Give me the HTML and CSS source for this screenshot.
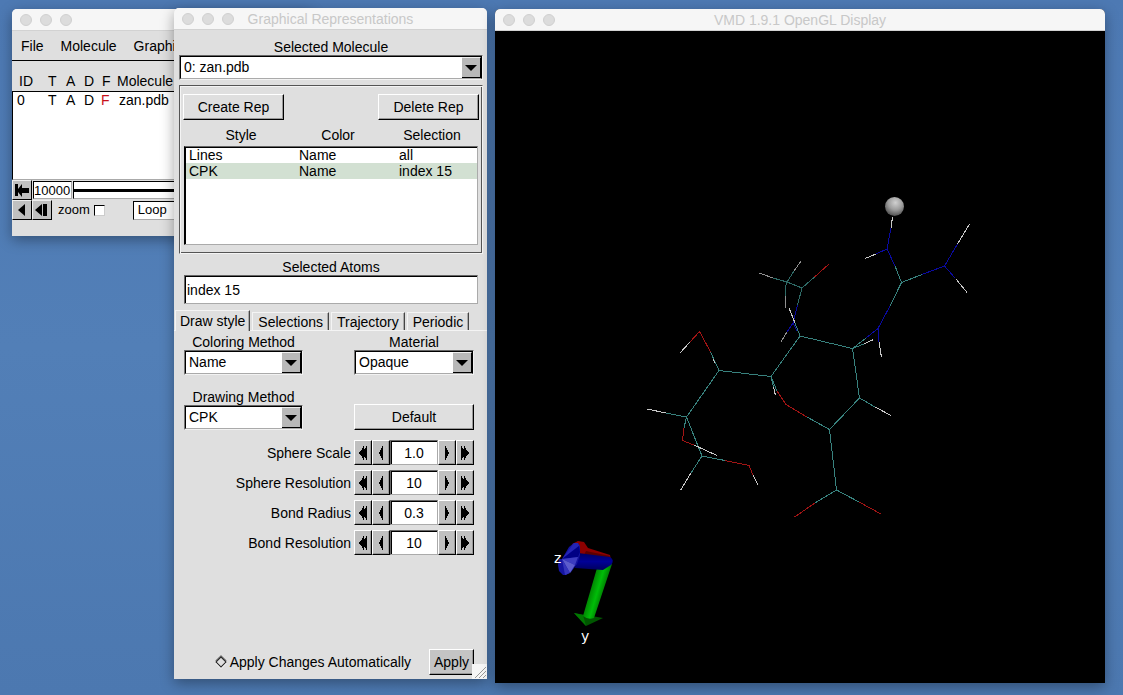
FILE: index.html
```html
<!DOCTYPE html>
<html lang="en">
<head>
<meta charset="utf-8">
<title>VMD</title>
<link rel="stylesheet" href="styles.css">
</head>
<body>
<svg class="defs" aria-hidden="true">
  <symbol id="left" viewBox="0 0 14 20"><path d="M9 3v14H8v-2H7v-2H6v-2H5V9h1V7h1V5h1V3z"/></symbol>
  <symbol id="right" viewBox="0 0 14 20"><path d="M5 3v14h1v-2h1v-2h1v-2h1V9H8V7H7V5H6V3z"/></symbol>
  <symbol id="left2" viewBox="0 0 14 20"><path d="M8 3v3h1V5h1V3h1v14h-1v-2H9v-1H8v3H7v-2H6v-2H5v-1H4v-1H3V9h1V8h1V7h1V5h1V3z"/></symbol>
  <symbol id="right2" viewBox="0 0 14 20"><path d="M6 3v3H5V5H4V3H3v14h1v-2h1v-1h1v3h1v-2h1v-2h1v-1h1v-1h1V9h-1V8H9V7H8V5H7V3z"/></symbol>
</svg>
<main class="desktop">
  <section class="window main-window" aria-label="VMD Main">
    <header class="titlebar"><i></i><i></i><i></i></header>
    <nav class="menubar"><button>File</button><button>Molecule</button><button>Graphics</button></nav>
    <div class="mol-row mol-head"><span>ID</span><span>T</span><span>A</span><span>D</span><span>F</span><span>Molecule</span></div>
    <div class="mol-list">
      <div class="mol-row"><span>0</span><span>T</span><span>A</span><span>D</span><span class="red">F</span><span>zan.pdb</span></div>
    </div>
    <div class="transport">
      <button class="key" aria-label="Go to start"><svg width="16" height="16"><path d="M1 2h3v5l4-5v4h7v5H8v4L4 10v4H1z"/></svg></button>
      <input class="frame" value="10000" aria-label="Frame">
      <div class="track"></div>
    </div>
    <div class="transport">
      <button class="key" aria-label="Play backwards"><svg width="16" height="16"><path d="M11 2v12L4 8z"/></svg></button>
      <button class="key" aria-label="Step backwards"><svg width="16" height="16"><path d="M8 2v12L1 8zM9 2h4v12H9z"/></svg></button>
      <label class="zoom">zoom <input type="checkbox"></label>
      <select class="loop" aria-label="Loop mode"><option>Loop</option></select>
    </div>
  </section>

  <section class="window reps-window" aria-label="Graphical Representations">
    <header class="titlebar"><i></i><i></i><i></i><h1 class="reps-title">Graphical Representations</h1></header>
    <div class="reps-body">
      <label class="caption" for="molecule">Selected Molecule</label>
      <div class="choice"><select id="molecule"><option>0: zan.pdb</option></select><span class="arrow"></span></div>
      <div class="group">
        <div class="rep-actions"><button class="push">Create Rep</button><button class="push">Delete Rep</button></div>
        <div class="rep-head"><span>Style</span><span>Color</span><span>Selection</span></div>
        <div class="rep-list">
          <table>
            <tr><td>Lines</td><td>Name</td><td>all</td></tr>
            <tr class="selected"><td>CPK</td><td>Name</td><td>index 15</td></tr>
          </table>
        </div>
      </div>
      <label class="caption atoms-label" for="atoms">Selected Atoms</label>
      <input class="atoms" id="atoms" value="index 15">
    </div>
    <div class="tabs" role="tablist">
      <button class="tab active" role="tab">Draw style</button><button class="tab" role="tab">Selections</button><button class="tab" role="tab">Trajectory</button><button class="tab" role="tab">Periodic</button>
    </div>
    <div class="panel">
      <div class="methods">
        <div><label class="caption" for="coloring">Coloring Method</label><div class="choice"><select id="coloring"><option>Name</option></select><span class="arrow"></span></div></div>
        <div><label class="caption" for="material">Material</label><div class="choice"><select id="material"><option>Opaque</option></select><span class="arrow"></span></div></div>
        <div><label class="caption" for="drawing">Drawing Method</label><div class="choice"><select id="drawing"><option>CPK</option></select><span class="arrow"></span></div></div>
        <button class="push default">Default</button>
      </div>
      <div class="spinners">
        <label for="s1">Sphere Scale</label>
        <div class="spin"><button aria-label="Much less"><svg><use href="#left2"/></svg></button><button aria-label="Less"><svg><use href="#left"/></svg></button><input id="s1" value="1.0"><button aria-label="More"><svg><use href="#right"/></svg></button><button aria-label="Much more"><svg><use href="#right2"/></svg></button></div>
        <label for="s2">Sphere Resolution</label>
        <div class="spin"><button aria-label="Much less"><svg><use href="#left2"/></svg></button><button aria-label="Less"><svg><use href="#left"/></svg></button><input id="s2" value="10"><button aria-label="More"><svg><use href="#right"/></svg></button><button aria-label="Much more"><svg><use href="#right2"/></svg></button></div>
        <label for="s3">Bond Radius</label>
        <div class="spin"><button aria-label="Much less"><svg><use href="#left2"/></svg></button><button aria-label="Less"><svg><use href="#left"/></svg></button><input id="s3" value="0.3"><button aria-label="More"><svg><use href="#right"/></svg></button><button aria-label="Much more"><svg><use href="#right2"/></svg></button></div>
        <label for="s4">Bond Resolution</label>
        <div class="spin"><button aria-label="Much less"><svg><use href="#left2"/></svg></button><button aria-label="Less"><svg><use href="#left"/></svg></button><input id="s4" value="10"><button aria-label="More"><svg><use href="#right"/></svg></button><button aria-label="Much more"><svg><use href="#right2"/></svg></button></div>
      </div>
    </div>
    <footer class="apply-row">
      <label class="auto"><input type="checkbox">Apply Changes Automatically</label>
      <button class="push apply">Apply</button>
    </footer>
    <svg class="grip" width="15" height="15" aria-hidden="true"><path d="M3 14L14 3M7 14L14 7M11 14l3-3"/></svg>
  </section>

  <section class="window display-window" aria-label="OpenGL Display">
    <header class="titlebar"><i></i><i></i><i></i><h1 class="display-title">VMD 1.9.1 OpenGL Display</h1></header>
    <svg class="scene" viewBox="495 31 610 652" role="img" aria-label="Molecule zan.pdb">
      <defs>
        <radialGradient id="ball" cx=".55" cy=".3" r=".75"><stop offset="0" stop-color="#d0d0d0"/><stop offset=".5" stop-color="#9c9c9c"/><stop offset="1" stop-color="#444"/></radialGradient>
        <linearGradient id="green" x1="588" y1="592" x2="605" y2="597" gradientUnits="userSpaceOnUse"><stop offset="0" stop-color="#007a00"/><stop offset=".5" stop-color="#00bd08"/><stop offset="1" stop-color="#006400"/></linearGradient>
        <linearGradient id="blue" x1="0" y1="0" x2="0" y2="1"><stop offset="0" stop-color="#000060"/><stop offset=".5" stop-color="#000096"/><stop offset="1" stop-color="#00005e"/></linearGradient>
      </defs>
      <g class="bonds">
        <path class="c" d="M895 266L901.5 282.5L922 274.5M901.5 282.5L890 306M866 338L852.5 348.5L864 344M852.5 348.5L800 336L771 376.5L719 370.5L686.5 417L702 456L725 460.5M852.5 348.5L859.5 398L875 407M859.5 398L829.5 429.5L807 417M829.5 429.5L836.5 490L815 503M836.5 490L859 502M777 391L771 376.5L773.5 387M719 370.5L710.5 352M686.5 417L666 413M686.5 417L684 428M702 456L691 473M800 336L795 323"/>
        <path class="c far" d="M773 278L787 282L794 271M785.5 296V286L787 282L802 288L814.5 277M802 288L797.5 305"/>
        <path class="n" d="M891 228L887 249L876 254M887 249L895 266M922 274.5L944.5 266L957.5 244M944.5 266L955 278M890 306L878 328.5L879 342M878 328.5L866 338M797.5 305L793 323L787 332M793 323L797 331"/>
        <path class="o" d="M807 417L786 404.5L777 391M710.5 352L699.5 331.5L690 342M684 428L682.5 440.5L700 447.5M725 460.5L749 465.5L753 475M815 503L794.5 517M859 502L881 514M814.5 277L829 264"/>
        <path class="h" d="M892.5 217L891 228M876 254L865 258.5M957.5 244L969.5 224M956 279L967 292.5M879 342L881.5 357.5M864 344L873.5 339.5M875 407L891 415.5M773.5 387L775.5 395.5M690 342L679.5 353.5M715 363L713 359M666 413L647 409M694 445L717 455.5M753 475L758 485M691 473L680.5 490.5M789 308L795 323"/>
        <path class="h far" d="M773 278L759 273M794 271L801 261M785.5 296V308M787 332L781 342"/>
      </g>
      <circle cx="894.5" cy="206.5" r="9.5" fill="url(#ball)"/>
      <path fill="#8c0000" d="M572 544l6-3 6 1 4 6 22 7 1 5-35-7z"/>
      <path fill="#5c0000" d="M586 551l24 5-2 3-24-4z"/>
      <path fill="#005600" d="M574 613l29 5-17 8z"/>
      <path fill="#007800" d="M574 613l9 2 3 11z"/>
      <path fill="url(#green)" d="M597 568l-14 48q5 4 11 2l18-54z"/>
      <path fill="url(#blue)" d="M578 553l32 4q5 3 1 8l-8 5-28-2z"/>
      <path fill="#1414a0" d="M562 559l7-12 5-4h4l2 3v9l-3 9-6 8-5 3h-3l-4-4-1-6 1-6z"/>
      <path fill="#2424b4" d="M562 559l12-16h4l1 3z"/>
      <path fill="#000084" d="M562 559l17-13 1 6-2 5z"/>
      <path fill="#3c3cc0" d="M562 559l16-2-3 8z"/>
      <path fill="#5c5ccc" d="M562 559l13 6-5 8z"/>
      <path fill="#3434bc" d="M562 559l8 14-5 2z"/>
      <text x="554" y="563">z</text><text x="581" y="641">y</text>
    </svg>
  </section>
</main>
</body>
</html>
```
FILE: styles.css
```css
* { box-sizing: border-box; }
body { margin: 0; font: 14px/16px "Liberation Sans", Arial, sans-serif; color: #000; }
button, input, select { font: inherit; color: inherit; margin: 0; padding: 0; border: 0; border-radius: 0; background: none; appearance: none; outline: 0; }
.defs { position: absolute; width: 0; height: 0; }
.desktop { position: relative; height: 100vh; min-height: 690px; overflow: hidden; background: linear-gradient(#4d79b3, #527fb7 50%, #4c78b0); }

.window { position: absolute; display: flex; flex-direction: column; background: #dfdfdf; border-radius: 5px 5px 0 0; box-shadow: 0 4px 14px rgba(0, 0, 0, .35); }
.main-window { left: 12px; top: 9px; width: 300px; }
.reps-window { left: 174px; top: 8px; bottom: 16px; width: 313px; }
.display-window { left: 495px; top: 9px; right: 18px; bottom: 12px; background: #000; }

.titlebar { flex: none; height: 22px; display: flex; align-items: center; gap: 8px; padding-left: 8px; background: #f6f6f6; border-bottom: 1px solid #d2d2d2; border-radius: 5px 5px 0 0; }
.titlebar i { width: 12px; height: 12px; border-radius: 50%; background: #dcdcdc; border: 1px solid #d0d0d0; }
.titlebar h1 { flex: 1; margin: 0; font-size: 14px; font-weight: 400; text-align: center; white-space: nowrap; color: #c8c8c8; }
.titlebar .reps-title { padding-right: 68px; }
.titlebar .display-title { padding-right: 68px; }

.menubar { display: flex; gap: 17px; height: 30px; padding-left: 9px; border-bottom: 1px solid #000; }
.mol-row { display: grid; grid-template-columns: 29px 18px 18px 18px 15px 1fr; height: 16px; padding-left: 7px; }
.mol-head { margin: 12px 0 2px; }
.mol-list { height: 89px; background: #fff; border: solid; border-width: 1px 0 1px 1px; border-color: #000 #000 #aaa; }
.mol-list .mol-row { padding-left: 4px; grid-template-columns: 31px 18px 18px 17px 18px 1fr; }
.red { color: #c8101a; }
.transport { display: flex; align-items: center; height: 20px; font-size: 13px; }
.transport:last-child { margin-bottom: 16px; }
.key { flex: none; width: 20px; height: 20px; display: grid; place-items: center; background: #c0c0c0; border: 1px solid; border-color: #eee #000 #000 #eee; }
.frame { width: 39px; height: 18px; margin: 0 1px; background: #fff; border: 1px solid; border-color: #000 #aaa #aaa #000; }
.track { flex: 1; height: 18px; background: linear-gradient(#fff 7px, #000 7px, #000 10px, #fff 10px); border: 1px solid; border-color: #000 #aaa #aaa #000; }
.zoom { display: flex; align-items: center; gap: 4px; padding: 0 28px 0 6px; }
.zoom input { width: 11px; height: 11px; background: #fff; border: 1px solid; border-color: #000 #ccc #ccc #000; }
.loop { width: 100px; height: 19px; padding-left: 4px; background: #fff; border: 1px solid; border-color: #000 #aaa #aaa #000; }

.reps-body { display: flex; flex-direction: column; padding: 9px 4px 0 5px; }
.caption { display: block; text-align: center; }
.choice { position: relative; height: 25px; background: #fff; border: 1px solid; border-color: #666 #f2f2f2 #f2f2f2 #777; }
.choice select { display: block; width: 100%; height: 100%; padding: 0 0 1px 3px; border: 1px solid; border-color: #000 #000 #aaa #000; }
.arrow { position: absolute; top: 1px; right: 1px; width: 19px; height: 21px; display: grid; place-items: center; background: #b8b8b8; border: solid; border-width: 1px 1px 1px 0; border-color: #eee #000 #000; pointer-events: none; }
.arrow::before { content: ""; border: solid transparent; border-width: 6px 6px 0; border-top-color: #000; }
.group { margin-top: 5px; padding: 8px 3px; border: 1px solid; border-color: #555 #f4f4f4 #f4f4f4 #555; box-shadow: inset 1px 1px #f4f4f4, inset -1px -1px #555; }
.push { height: 26px; padding-bottom: 1px; border: 1px solid; border-color: #fff #000 #000 #fff; background: #dfdfdf; box-shadow: inset -1px -1px #999; }
.rep-actions { display: flex; justify-content: space-between; }
.rep-actions .push { width: 101px; }
.rep-head { display: grid; grid-template-columns: 116px 78px 1fr; margin: 7px 0 3px; text-align: center; }
.rep-head span:last-child { padding-left: 8px; }
.rep-list { height: 99px; background: #fff; border: 1px solid; border-color: #666 #aaa #aaa #000; box-shadow: inset 1px 1px #000; padding: 0 0 0 1px; margin: 0 1px; }
.rep-list table { width: 100%; table-layout: fixed; border-spacing: 0; }
.rep-list td { height: 16px; padding: 0 0 0 3px; }
.rep-list td:first-child { width: 110px; }
.rep-list td:nth-child(2) { width: 100px; }
.selected { background: #d2e0d2; }
.atoms-label { margin-top: 5px; }
.atoms { height: 29px; margin: 0 5px; padding-left: 2px; background: #fff; border: 1px solid; border-color: #666 #aaa #aaa #666; box-shadow: inset 1px 1px #000; }

.tabs { display: flex; align-items: flex-end; gap: 2px; height: 21px; margin-top: 6px; padding-left: 1px; border-bottom: 1px solid #f4f4f4; }
.tab { height: 18px; padding: 0 5px; border: solid; border-width: 1px 1px 0; border-color: #f4f4f4 #444 #f4f4f4 #f4f4f4; box-shadow: inset -1px 0 #aaa; white-space: nowrap; }
.tab.active { height: 21px; padding: 0 4px; margin-bottom: -1px; background: #dfdfdf; }
.panel { padding: 3px 13px 0 10px; }
.methods { display: grid; grid-template-columns: 119px 120px; justify-content: space-between; row-gap: 14px; }
.default { align-self: end; }
.spinners { display: grid; grid-template-columns: 1fr 120px; gap: 5px 3px; align-items: center; margin-top: 10px; text-align: right; }
.spin { display: flex; height: 25px; }
.spin button { width: 18px; display: grid; place-items: center; background: #c0c0c0; border: 1px solid; border-color: #fff #000 #000 #fff; box-shadow: inset -1px -1px #999; }
.spin svg { width: 14px; height: 20px; shape-rendering: crispEdges; }
.spin input { width: 48px; text-align: center; background: #fff; border: 1px solid; border-color: #666 #aaa #aaa #666; box-shadow: inset 1px 1px #000; }
.apply-row { display: flex; align-items: center; justify-content: flex-end; gap: 18px; margin-top: auto; padding: 0 13px 4px 0; }
.auto { display: flex; align-items: center; gap: 5px; }
.auto input { width: 8px; height: 8px; border: 1px solid #222; box-shadow: -1px -1px #777, 1px 1px #f4f4f4; transform: rotate(45deg); }
.apply { width: 45px; background: #c4c4c4; }
.grip { position: absolute; right: 0; bottom: 0; background: #f6f6f6; fill: none; stroke: #999; }

.scene { flex: 1; min-height: 0; width: 100%; }
.scene text { font: 14px "DejaVu Sans", sans-serif; fill: #fff; }
.bonds { fill: none; stroke-width: 1; shape-rendering: crispEdges; }
.c { stroke: #38827e; }
.c.far { stroke: #2e6a66; }
.n { stroke: #0a0aa0; }
.o { stroke: #a01414; }
.h { stroke: #c8c8c8; }
.h.far { stroke: #909090; }
```
